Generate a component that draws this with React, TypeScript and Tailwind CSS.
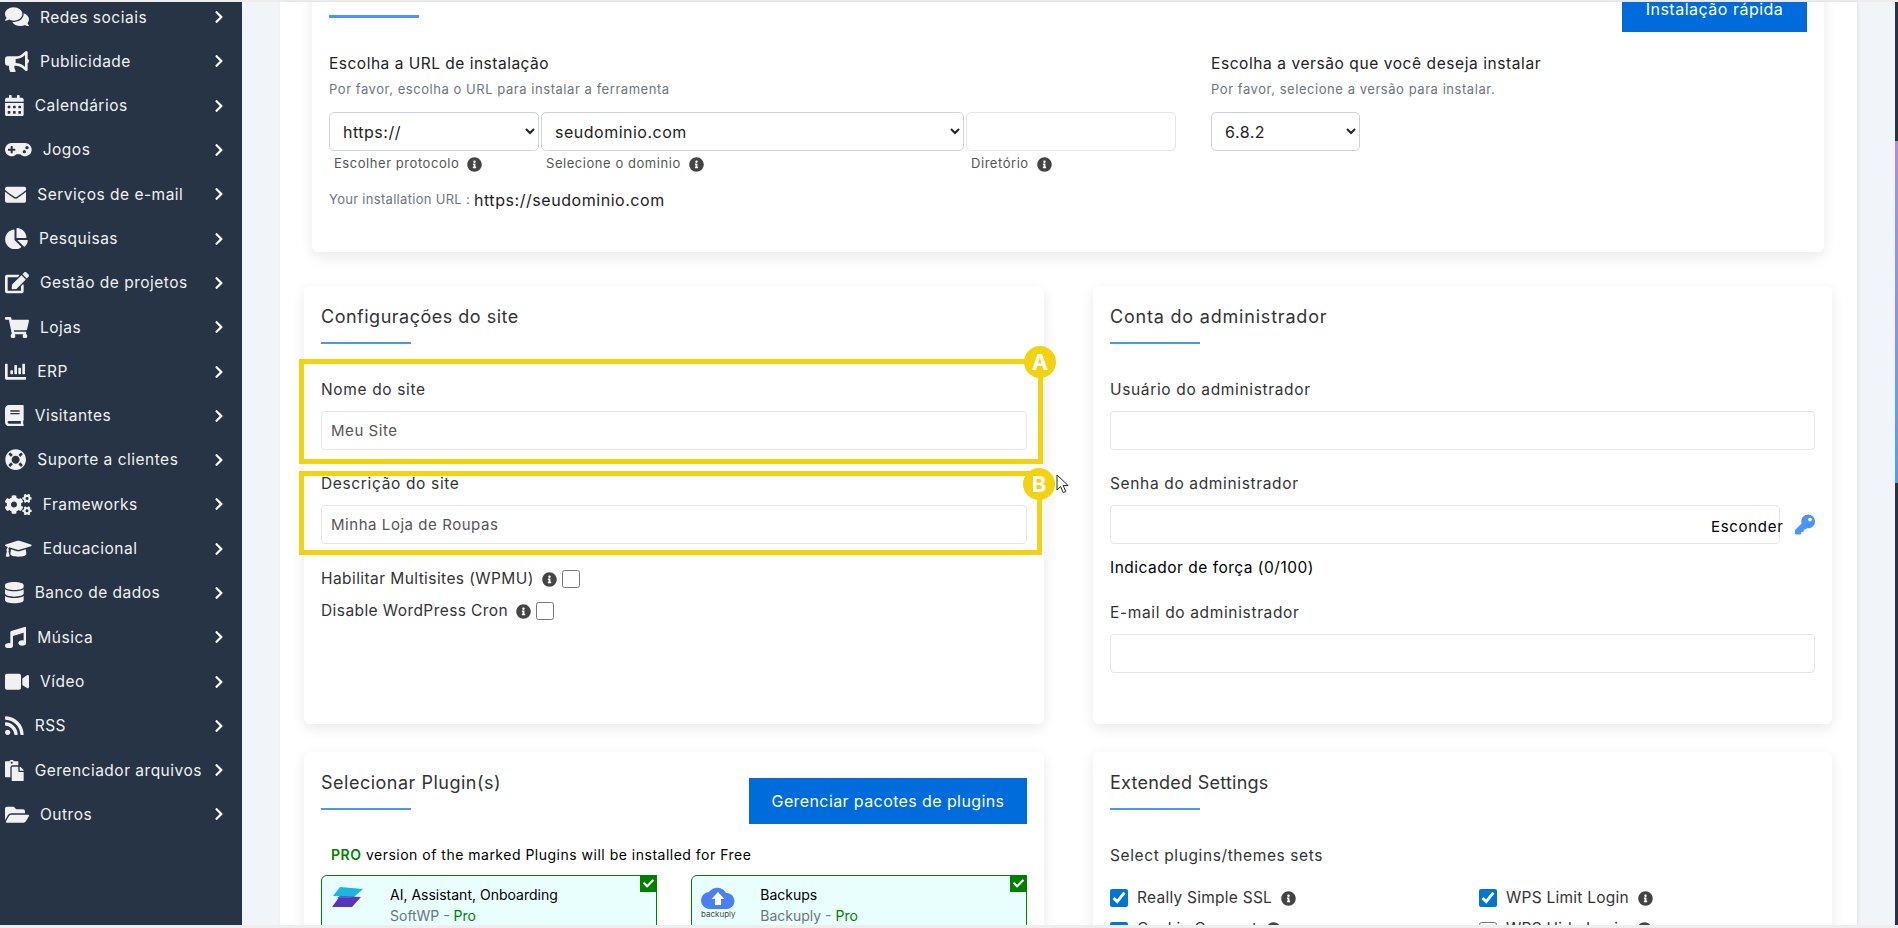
import React from "react";
import {
  FaComments, FaBullhorn, FaCalendarAlt, FaGamepad, FaEnvelope, FaChartPie, FaEdit, FaShoppingCart,
  FaChartBar, FaBook, FaLifeRing, FaCogs, FaGraduationCap, FaDatabase, FaMusic, FaVideo, FaRss, FaPaste,
  FaFolderOpen, FaChevronRight, FaInfoCircle, FaKey, FaCheck,
} from "react-icons/fa";

const menu = [
  { t: "Redes sociais", I: FaComments, w: "w-[24px]" },
  { t: "Publicidade", I: FaBullhorn, w: "w-[24px]" },
  { t: "Calendários", I: FaCalendarAlt, w: "w-[18.7px]" },
  { t: "Jogos", I: FaGamepad, w: "w-[26.7px]" },
  { t: "Serviços de e-mail", I: FaEnvelope, w: "w-[21.3px]" },
  { t: "Pesquisas", I: FaChartPie, w: "w-[23px]" },
  { t: "Gestão de projetos", I: FaEdit, w: "w-[24px]" },
  { t: "Lojas", I: FaShoppingCart, w: "w-[24px]" },
  { t: "ERP", I: FaChartBar, w: "w-[21.3px]" },
  { t: "Visitantes", I: FaBook, w: "w-[18.7px]" },
  { t: "Suporte a clientes", I: FaLifeRing, w: "w-[21.3px]" },
  { t: "Frameworks", I: FaCogs, w: "w-[26.7px]" },
  { t: "Educacional", I: FaGraduationCap, w: "w-[26.7px]" },
  { t: "Banco de dados", I: FaDatabase, w: "w-[18.7px]" },
  { t: "Música", I: FaMusic, w: "w-[21.3px]" },
  { t: "Vídeo", I: FaVideo, w: "w-[24px]" },
  { t: "RSS", I: FaRss, w: "w-[18.7px]" },
  { t: "Gerenciador arquivos", I: FaPaste, w: "w-[18.7px]" },
  { t: "Outros", I: FaFolderOpen, w: "w-[24px]" },
];

function Info({ className = "" }: { className?: string }) {
  return <FaInfoCircle className={"w-[15px] h-[15px] text-[#444444] shrink-0 " + className} />;
}

function Rule({ className = "" }: { className?: string }) {
  return <div className={"w-[90px] h-[2px] bg-[#4a94fa] " + className} />;
}

function Field({ label, value = "", top }: { label: string; value?: string; top: string }) {
  return (
    <div className={top}>
      <div className="h-[24px] leading-[26px] text-[15.5px] tracking-[0.65px] text-[#333333]">{label}</div>
      <input
        readOnly
        value={value}
        className="mt-[10px] block w-full h-[39px] rounded-[4px] border border-[#e3e5e8] bg-white px-[9px] text-[15px] tracking-[0.55px] text-[#555555] outline-none"
      />
    </div>
  );
}

function Check({ on = false }: { on?: boolean }) {
  return (
    <input
      type="checkbox"
      readOnly
      checked={on}
      className="w-[18px] h-[18px] m-0 shrink-0 accent-[#0075d6]"
    />
  );
}

function Badge({ children, className }: { children: string; className: string }) {
  return (
    <div className={"absolute w-[32px] h-[32px] rounded-full bg-[#f2d211] flex items-center justify-center text-white font-bold text-[22px] leading-none " + className}>
      {children}
    </div>
  );
}

function PluginCard({ title, by, logo }: { title: string; by: string; logo: React.ReactNode }) {
  return (
    <div className="relative w-[336px] h-[90px] rounded-[6px] border border-[#008000] bg-[#e8fffd] flex">
      <div className="w-[68px] shrink-0">{logo}</div>
      <div className="pt-[9px]">
        <div className="h-[21px] leading-[20px] text-[14px] text-black">{title}</div>
        <div className="h-[20px] leading-[20px] text-[14px] text-[#6c757d]">
          {by} - <span className="text-[#008000]">Pro</span>
        </div>
      </div>
      <div className="absolute right-[-1px] top-[-1px] w-[17px] h-[17px] bg-[#008000] flex items-center justify-center">
        <FaCheck className="w-[11px] h-[11px] text-white" />
      </div>
    </div>
  );
}

export default function App() {
  return (
    <div className="w-[1898px] h-[928px] overflow-hidden flex flex-col bg-[#f1f5f9] font-[Inter,sans-serif]">
      <div className="h-[2px] shrink-0 bg-[#eeeeee]" />
      <div className="flex flex-1 min-h-0">
        {/* Sidebar */}
        <aside className="w-[242px] shrink-0 bg-[#263445] overflow-hidden">
          <div className="mt-[-7px]">
            {menu.map(({ t, I, w }) => (
              <div key={t} className="h-[44.31px] flex items-center pl-[5px] text-[#f1f1f1]">
                <I className={w + " h-[21.33px] shrink-0"} />
                <span className="ml-[11px] text-[15.5px] tracking-[0.5px] whitespace-nowrap">{t}</span>
                <FaChevronRight className="absolute left-[214px] w-[10px] h-[14px] text-white" />
              </div>
            ))}
          </div>
        </aside>

        {/* Main */}
        <main className="ml-[38px] w-[1577px] shrink-0 bg-white overflow-hidden shadow-[1px_0_3px_rgba(0,0,0,0.08)]">
          {/* Install card */}
          <section className="mt-[-20px] ml-[32px] w-[1512px] h-[270px] rounded-[6px] bg-white pl-[17px] pr-[17px] shadow-[0_6px_14px_rgba(0,0,0,0.08)]">
            <div className="h-[50px] flex justify-between items-end">
              <Rule className="mb-[14px] h-[3px]" />
              <button className="w-[185px] h-[46px] bg-[#006bdb] text-white text-[16px] tracking-[0.5px]">Instalação rápida</button>
            </div>
            <div className="flex">
              <div className="w-[882px] shrink-0">
                <div className="mt-[19px] h-[24px] leading-[26px] text-[15.5px] tracking-[0.5px] text-[#222222]">Escolha a URL de instalação</div>
                <div className="mt-[4px] h-[20px] leading-[20px] text-[13px] tracking-[0.55px] text-[#6c757d]">Por favor, escolha o URL para instalar a ferramenta</div>
                <div className="mt-[13px] flex gap-[2px]">
                  <div className="w-[210px]">
                    <select className="w-full h-[39px] rounded-[5px] border border-[#cdd2da] bg-white pl-[9px] text-[16px] tracking-[0.5px] text-[#222222]">
                      <option>https://</option>
                    </select>
                    <div className="mt-[3px] pl-[5px] h-[20px] flex items-center gap-[8px] text-[13px] tracking-[0.55px] text-[#555555]">Escolher protocolo <Info /></div>
                  </div>
                  <div className="w-[423px]">
                    <select className="w-full h-[39px] rounded-[5px] border border-[#cdd2da] bg-white pl-[9px] text-[16px] tracking-[0.5px] text-[#222222]">
                      <option>seudominio.com</option>
                    </select>
                    <div className="mt-[3px] pl-[5px] h-[20px] flex items-center gap-[8px] text-[13px] tracking-[0.55px] text-[#555555]">Selecione o dominio <Info /></div>
                  </div>
                  <div className="w-[210px]">
                    <input readOnly className="block w-full h-[39px] rounded-[5px] border border-[#e3e5e8] bg-white" />
                    <div className="mt-[3px] pl-[5px] h-[20px] flex items-center gap-[8px] text-[13px] tracking-[0.55px] text-[#555555]">Diretório <Info /></div>
                  </div>
                </div>
                <div className="mt-[14px] h-[24px] flex items-center text-[13px] tracking-[0.3px] text-[#6c757d]">
                  Your installation URL :&nbsp;<span className="text-[16px] tracking-[0.55px] text-[#222222]">https://seudominio.com</span>
                </div>
              </div>
              <div>
                <div className="mt-[19px] h-[24px] leading-[26px] text-[15.5px] tracking-[0.58px] text-[#222222]">Escolha a versão que você deseja instalar</div>
                <div className="mt-[4px] h-[20px] leading-[20px] text-[13px] tracking-[0.55px] text-[#6c757d]">Por favor, selecione a versão para instalar.</div>
                <select className="mt-[13px] block w-[149px] h-[39px] rounded-[5px] border border-[#cdd2da] bg-white pl-[9px] text-[16px] tracking-[0.5px] text-[#222222]">
                  <option>6.8.2</option>
                </select>
              </div>
            </div>
          </section>

          {/* Site + admin */}
          <div className="mt-[34px] ml-[24px] flex gap-[49px]">
            <section className="relative w-[740px] h-[438px] shrink-0 rounded-[6px] bg-white pt-[17px] pl-[17px] pr-[17px] shadow-[0_4px_14px_rgba(0,0,0,0.09)]">
              <h2 className="h-[28px] leading-[28px] text-[18px] tracking-[0.5px] text-[#333333]">Configurações do site</h2>
              <Rule className="mt-[11px]" />
              <Field top="mt-[33px]" label="Nome do site" value="Meu Site" />
              <Field top="mt-[21px]" label="Descrição do site" value="Minha Loja de Roupas" />
              <div className="mt-[23px] h-[24px] flex items-center text-[15.5px] tracking-[0.42px] text-[#333333]">
                Habilitar Multisites (WPMU)<Info className="ml-[8px] mr-[5px]" /><Check />
              </div>
              <div className="mt-[8px] h-[24px] flex items-center text-[15.5px] tracking-[0.42px] text-[#333333]">
                Disable WordPress Cron<Info className="ml-[8px] mr-[5px]" /><Check />
              </div>

              {/* Annotation boxes */}
              <div className="absolute left-[-5px] top-[73px] w-[744px] h-[105px] border-[5px] border-[#f2d211]" />
              <div className="absolute left-[-5px] top-[185px] w-[743px] h-[84px] border-[5px] border-[#f2d211]" />
              <Badge className="left-[720px] top-[60px]">A</Badge>
              <Badge className="left-[719px] top-[182px]">B</Badge>
              <svg className="absolute left-[752px] top-[188px] w-[13px] h-[20px]" viewBox="0 0 13 20">
                <path d="M1 1v15l3.6-3.4 2.6 6 2.6-1.1-2.6-5.9h5z" fill="#ffffff" stroke="#222222" strokeWidth="1" />
              </svg>
            </section>

            <section className="w-[739px] h-[438px] shrink-0 rounded-[6px] bg-white pt-[17px] pl-[17px] pr-[17px] shadow-[0_4px_14px_rgba(0,0,0,0.09)]">
              <h2 className="h-[28px] leading-[28px] text-[18px] tracking-[0.8px] text-[#333333]">Conta do administrador</h2>
              <Rule className="mt-[11px]" />
              <Field top="mt-[33px]" label="Usuário do administrador" />
              <div className="mt-[21px] h-[24px] leading-[26px] text-[15.5px] tracking-[0.65px] text-[#333333]">Senha do administrador</div>
              <div className="relative mt-[10px] h-[39px]">
                <input readOnly className="block w-[670px] h-[39px] rounded-[4px] border border-[#e3e5e8] bg-white" />
                <span className="absolute left-[601px] top-[10px] h-[24px] leading-[24px] text-[15px] tracking-[0.7px] text-black whitespace-nowrap">Esconder</span>
                <FaKey className="absolute left-[685px] top-[9px] w-[20px] h-[21px] text-[#4a94fa]" />
              </div>
              <div className="mt-[10px] h-[24px] leading-[27px] text-[15.5px] tracking-[0.5px] font-normal text-black">Indicador de força (0/100)</div>
              <Field top="mt-[22px]" label="E-mail do administrador" />
            </section>
          </div>

          {/* Plugins + extended */}
          <div className="mt-[28px] ml-[24px] flex gap-[49px]">
            <section className="w-[740px] h-[300px] shrink-0 rounded-[6px] bg-white pt-[17px] pl-[17px] pr-[17px] shadow-[0_4px_14px_rgba(0,0,0,0.09)]">
              <div className="flex justify-between h-[73px]">
                <div>
                  <h2 className="h-[28px] leading-[28px] text-[18px] tracking-[0.5px] text-[#333333]">Selecionar Plugin(s)</h2>
                  <Rule className="mt-[11px]" />
                </div>
                <button className="mt-[9px] w-[278px] h-[46px] bg-[#006bdb] text-white text-[16px] tracking-[0.4px]">Gerenciar pacotes de plugins</button>
              </div>
              <div className="pl-[10px] h-[24px] leading-[25px] text-[14px] tracking-[0.5px] text-black">
                <span className="text-[#008000] font-semibold">PRO</span> version of the marked Plugins will be installed for Free
              </div>
              <div className="mt-[9px] flex gap-[34.5px]">
                <PluginCard
                  title="AI, Assistant, Onboarding"
                  by="SoftWP"
                  logo={
                    <svg className="mt-[11px] ml-[10px] w-[32px] h-[22px]" viewBox="0 0 32 22">
                      <path d="M8 0 31 2 22 10 1 9z" fill="#1eb4e0" />
                      <path d="M8 9 29 10 20 20 0 20z" fill="#5a33bf" />
                      <path d="M8 9 22 10 18 11 5 11z" fill="#3c6fd0" />
                    </svg>
                  }
                />
                <PluginCard
                  title="Backups"
                  by="Backuply"
                  logo={
                    <div className="mt-[11px] ml-[9px] w-[34px] flex flex-col items-center">
                      <svg className="w-[34px] h-[22px]" viewBox="0 0 34 22">
                        <path d="M9 22a8.5 8.5 0 0 1-1-17A10 10 0 0 1 25 6a8 8 0 0 1 1 16z" fill="#4a7ff5" />
                        <path d="M17 5l6.5 7H20v6h-6v-6h-3.500z" fill="#ffffff" />
                      </svg>
                      <span className="text-[8px] leading-[10px] text-[#444444]">backuply</span>
                    </div>
                  }
                />
              </div>
            </section>

            <section className="w-[739px] h-[300px] shrink-0 rounded-[6px] bg-white pt-[17px] pl-[17px] pr-[17px] shadow-[0_4px_14px_rgba(0,0,0,0.09)]">
              <h2 className="h-[28px] leading-[28px] text-[18px] tracking-[0.25px] text-[#333333]">Extended Settings</h2>
              <Rule className="mt-[11px]" />
              <div className="mt-[33px] h-[24px] leading-[25px] text-[15.5px] tracking-[0.6px] text-[#333333]">Select plugins/themes sets</div>
              <div className="mt-[20px] grid grid-cols-[369px_1fr] gap-y-[11px] text-[15.5px] tracking-[0.25px] text-[#333333]">
                <div className="h-[22px] flex items-center gap-[9px]"><Check on />Really Simple SSL<Info /></div>
                <div className="h-[22px] flex items-center gap-[9px]"><Check on />WPS Limit Login<Info /></div>
                <div className="h-[22px] flex items-center gap-[9px]">
                  <Check on />
                  <span className="mb-[4px] whitespace-nowrap">Cookie Consent</span>
                  <Info className="mb-[4px]" />
                </div>
                <div className="h-[22px] flex items-center gap-[9px]">
                  <Check />
                  <span className="mb-[4px] whitespace-nowrap">WPS Hide Login</span>
                  <Info className="mb-[4px]" />
                </div>
              </div>
            </section>
          </div>
        </main>

        {/* Scroll strip */}
        <div className="ml-[38px] w-[3px] shrink-0 flex flex-col bg-[#263445]">
          <div className="h-[139px] shrink-0" />
          <div className="h-[342px] shrink-0 bg-gradient-to-b from-[#a78bfa] to-[#4a9dff]" />
        </div>
      </div>
      <div className="h-[3px] shrink-0 bg-[#eeeeee]" />
    </div>
  );
}
